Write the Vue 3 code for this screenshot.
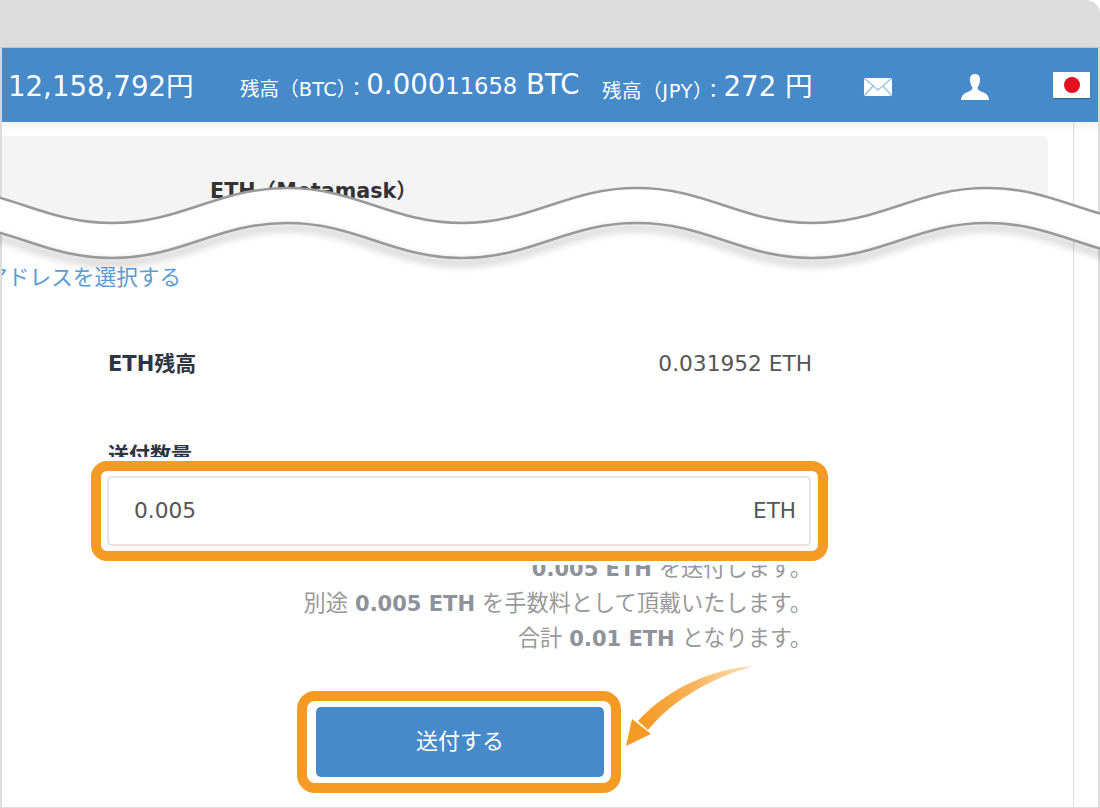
<script setup>
const notes = [
  { before: '', bold: '0.005 ETH', after: ' を送付します。' },
  { before: '別途 ', bold: '0.005 ETH', after: ' を手数料として頂戴いたします。' },
  { before: '合計 ', bold: '0.01 ETH', after: ' となります。' }
]
const topEdge = 'M-63,188 C7,188 42,223 112,223 C182,223 217,188 287,188 C357,188 392,223 462,223 C532,223 567,188 637,188 C707,188 742,223 812,223 C882,223 917,188 987,188 C1057,188 1092,223 1162,223'
const bottomEdge = 'M-63,223 C7,223 42,258 112,258 C182,258 217,223 287,223 C357,223 392,258 462,258 C532,258 567,223 637,223 C707,223 742,258 812,258 C882,258 917,223 987,223 C1057,223 1092,258 1162,258'
const band = topEdge + ' L1162,258 C1092,258 1057,223 987,223 C917,223 882,258 812,258 C742,258 707,223 637,223 C567,223 532,258 462,258 C392,258 357,223 287,223 C217,223 182,258 112,258 C42,258 7,223 -63,223 Z'
</script>

<template>
  <div class="frame">
    <div class="chrome"></div>
    <header class="bar">
      <span class="big rate">12,158,792円</span>
      <span class="balance btc">
        <span class="small">残高（BTC）：</span><span class="big">0.000</span><span class="mid">11658</span><span class="big"> BTC</span>
      </span>
      <span class="balance jpy">
        <span class="small">残高（JPY）：</span><span class="big">272 円</span>
      </span>
      <svg class="mail" width="30" height="20" viewBox="0 0 30 20">
        <path d="M1 1H29V19H1Z" fill="#fff" />
        <path d="M1 1L15 13L29 1M1 19L10 9M29 19L20 9" fill="none" stroke="#8fc0e6" stroke-width="1.2" />
      </svg>
      <svg class="person" width="28" height="26" viewBox="0 0 28 26">
        <path d="M14 0C9.800 0 8.500 3.500 9 7C9.400 10 10.500 12 11.500 13.500C11.500 16 9 17 5.500 18.500C2 20 0.500 22 0 26H28C27.500 22 26 20 22.500 18.500C19 17 16.500 16 16.500 13.500C17.500 12 18.600 10 19 7C19.500 3.500 18.200 0 14 0Z" fill="#fff" />
      </svg>
      <div class="flag"><span class="sun"></span></div>
    </header>

    <div class="content">
      <main class="main">
        <section class="panel">
          <span class="panel-title">ETH（Metamask）</span>
        </section>
        <a class="link">アドレスを選択する</a>
        <div class="form">
          <div class="row">
            <span class="label">ETH残高</span>
            <span class="value">0.031952 ETH</span>
          </div>
          <div class="label qty">送付数量</div>
          <div class="input-mark">
            <div class="input">
              <span>0.005</span>
              <span class="unit">ETH</span>
            </div>
          </div>
          <div class="notes">
            <p v-for="(n, i) in notes" :key="i">{{ n.before }}<b>{{ n.bold }}</b>{{ n.after }}</p>
          </div>
          <div class="submit-row">
            <div class="button-mark">
              <button class="submit" type="button">送付する</button>
            </div>
          </div>
        </div>
      </main>
    </div>

    <svg class="overlay" width="1100" height="808" viewBox="0 0 1100 808">
      <defs>
        <linearGradient id="tail" x1="755" y1="666" x2="645" y2="725" gradientUnits="userSpaceOnUse">
          <stop offset="0" stop-color="#f59a23" stop-opacity="0" />
          <stop offset="0.15" stop-color="#fbd6a3" />
          <stop offset="0.55" stop-color="#f7b155" />
          <stop offset="1" stop-color="#f59a23" />
        </linearGradient>
      </defs>
      <path :d="band" fill="#fff" />
      <path class="wave-shadow" :d="bottomEdge" fill="none" stroke="#000" stroke-width="3" />
      <path :d="topEdge" fill="none" stroke="#999" stroke-width="2.5" />
      <path :d="bottomEdge" fill="none" stroke="#999" stroke-width="2.5" />
      <path d="M755 666C714 668 668 688 638 721L648 730C670 703 708 678 755 666Z" fill="url(#tail)" />
      <path d="M626 746L632 719L651 734Z" fill="#f59a23" />
    </svg>
  </div>
</template>

<style>
html, body { margin: 0; background: #fff; }
</style>

<style scoped>
.frame {
  position: relative;
  width: 1100px;
  height: 808px;
  box-sizing: border-box;
  padding: 0 2px 2px;
  overflow: hidden;
  background: #ddd;
  border-radius: 0 14px 0 0;
  font-family: "DejaVu Sans", "Noto Sans CJK JP", sans-serif;
  color: #333;
}
.chrome {
  height: 48px;
  margin: 0 -2px;
  border-bottom: 1px solid #c9c9c9;
  box-sizing: border-box;
}
.bar {
  position: relative;
  z-index: 1;
  display: flex;
  align-items: center;
  box-sizing: border-box;
  height: 74px;
  padding: 0 0 2px 6px;
  background: #468aca;
  color: #fff;
  box-shadow: 0 3px 10px rgba(0, 0, 0, 0.08);
  white-space: pre;
}
.big { font-size: 27.6px; }
.mid { font-size: 22.6px; }
.small { font-size: 19.5px; letter-spacing: 0.1px; transform: translateY(2px); }
.jpy .small { letter-spacing: 0.6px; }
.rate { width: 232px; }
.balance { display: inline-flex; align-items: baseline; }
.btc { width: 362px; }
.jpy { width: 261px; }
.mail { flex: none; margin-top: 6px; }
.person { flex: none; margin: 6px 0 0 68px; }
.flag {
  flex: none;
  display: flex;
  align-items: center;
  justify-content: center;
  width: 37px;
  height: 26px;
  margin: 2px 0 0 64px;
  background: #fff;
  box-shadow: 0 1px 1px rgba(0, 0, 0, 0.25);
}
.sun { width: 16px; height: 16px; border-radius: 50%; background: #e60f1e; }
.content {
  display: flex;
  height: 685px;
  background: #fff;
}
.main {
  box-sizing: border-box;
  width: 1072px;
  height: 100%;
  padding-top: 14px;
  border-right: 1px solid #ddd;
}
.panel {
  box-sizing: border-box;
  width: 1046px;
  height: 86px;
  padding-left: 208px;
  padding-top: 41px;
  background: #f4f4f4;
  border-radius: 0 6px 0 0;
}
.panel-title { font-size: 20.7px; font-weight: 700; line-height: 28px; }
.link {
  display: block;
  height: 28px;
  margin-top: 42px;
  overflow: hidden;
  font-size: 21.7px;
  line-height: 28px;
  color: #5b9bd5;
  white-space: nowrap;
  text-indent: -16px;
}
.form { width: 704px; margin: 58px 0 0 106px; }
.row { display: flex; justify-content: space-between; height: 28px; }
.label { font-size: 21px; font-weight: 700; line-height: 28px; color: #2f3540; }
.value { font-size: 21.7px; line-height: 28px; color: #555; }
.qty { height: 28px; margin-top: 63px; }
.input-mark {
  position: relative;
  z-index: 1;
  box-sizing: border-box;
  width: 737px;
  height: 100px;
  margin: -8px 0 -10px -17px;
  padding: 5px 7px 5px 6px;
  background: #fff;
  border: 10px solid #f59a23;
  border-radius: 16px;
  box-shadow: 0 0 0 4px #fff;
}
.input {
  display: flex;
  align-items: center;
  justify-content: space-between;
  box-sizing: border-box;
  height: 70px;
  padding: 0 13px 2px 25px;
  border: 2px solid #e5e5e5;
  border-radius: 5px;
  font-size: 21.7px;
  color: #555;
}
.unit { font-size: 21.5px; }
.notes {
  text-align: right;
  font-size: 22.2px;
  color: #999;
}
.notes p { height: 35px; margin: 0; line-height: 35px; }
.notes b { color: #8e929a; font-size: 21px; }
.submit-row { display: flex; justify-content: center; margin-top: 35px; padding-right: 2px; }
.button-mark {
  box-sizing: border-box;
  width: 324px;
  height: 102px;
  padding: 6px 7px 6px 9px;
  background: #fff;
  border: 10px solid #f59a23;
  border-radius: 18px;
}
.submit {
  display: block;
  width: 100%;
  height: 70px;
  padding: 0 0 6px;
  border: 0;
  border-radius: 5px;
  background: #468aca;
  color: #fff;
  font: inherit;
  font-size: 22px;
}
.overlay {
  position: absolute;
  top: 0;
  left: 0;
  z-index: 2;
  pointer-events: none;
}
.wave-shadow {
  opacity: 0.4;
  filter: blur(4px);
  transform: translateY(5px);
}
</style>
